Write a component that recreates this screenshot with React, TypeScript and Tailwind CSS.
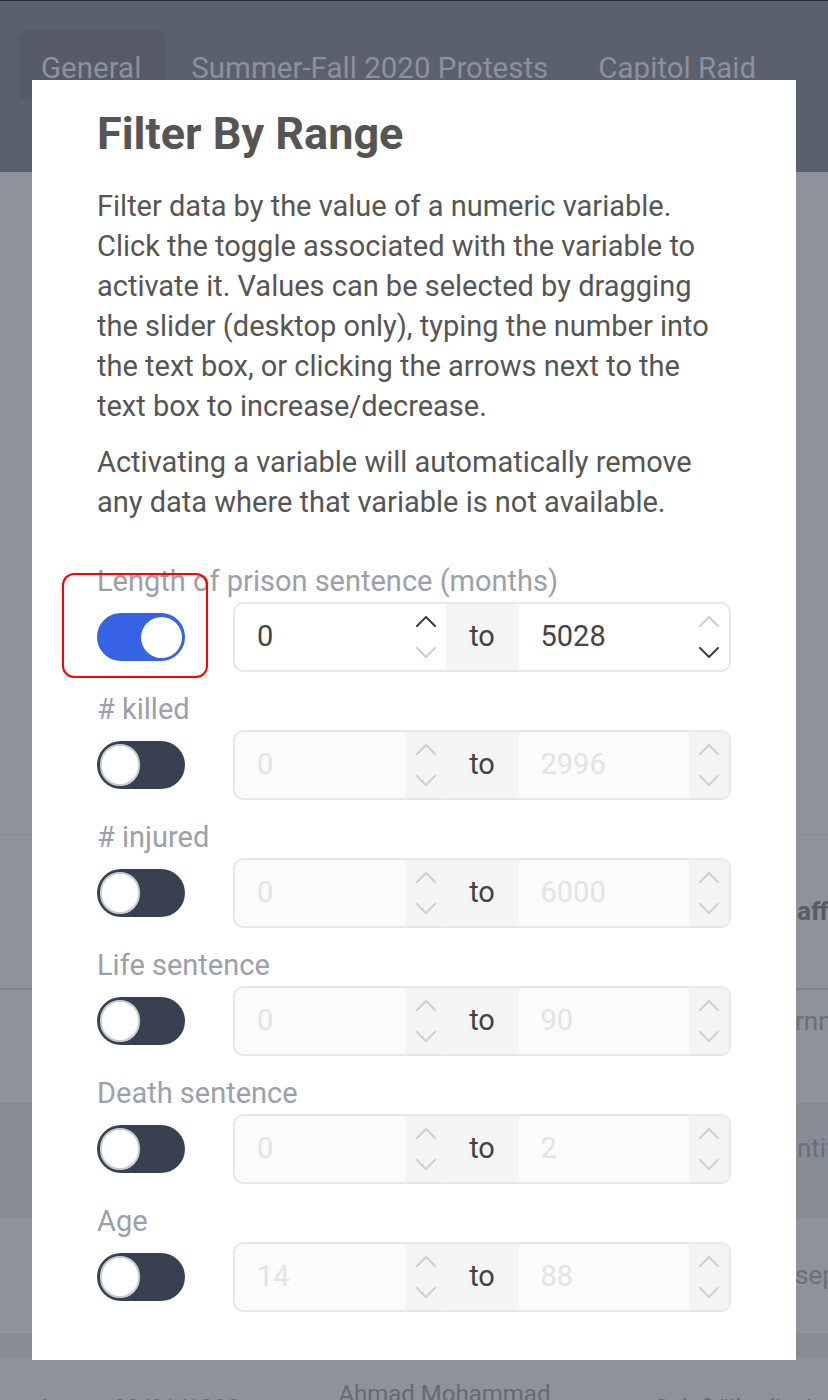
import React from "react";

const font = { fontFamily: "Roboto, 'Liberation Sans', sans-serif" };

interface RangeField {
  label: string; min: string; max: string; active: boolean;
}

const fields: RangeField[] = [
  { label: "Length of prison sentence (months)", min: "0", max: "5028", active: true },
  { label: "# killed", min: "0", max: "2996", active: false },
  { label: "# injured", min: "0", max: "6000", active: false },
  { label: "Life sentence", min: "0", max: "90", active: false },
  { label: "Death sentence", min: "0", max: "2", active: false },
  { label: "Age", min: "14", max: "88", active: false },
];

function Chevron({ dir, dark }: { dir: "up" | "down"; dark: boolean }) {
  return (
    <svg width="22" height="12" viewBox="0 0 22 12" fill="none">
      <polyline
        points={dir === "up" ? "2,11 11,2 20,11" : "2,1 11,10 20,1"}
        stroke={dark ? "#3f3f3f" : "#cfcfd3"}
        strokeWidth="2"
        strokeLinecap="round"
        strokeLinejoin="round"
      />
    </svg>
  );
}

function Spinner({ upDark, downDark, shaded }: { upDark: boolean; downDark: boolean; shaded: boolean }) {
  return (
    <div className={`w-[40px] h-full flex flex-col items-center justify-center gap-[20px] ${shaded ? "bg-[#f4f4f6]" : ""}`}>
      <Chevron dir="up" dark={upDark} />
      <Chevron dir="down" dark={downDark} />
    </div>
  );
}

function Toggle({ on }: { on: boolean }) {
  return on ? (
    <div className="w-[88px] h-[48px] rounded-full bg-[#3563e3] flex items-center justify-end pr-[3px]">
      <div className="w-[41px] h-[41px] rounded-full bg-white" />
    </div>
  ) : (
    <div className="w-[88px] h-[48px] rounded-full bg-[#394150] flex items-center pl-[3px]">
      <div className="w-[40px] h-[42px] rounded-full bg-white border-2 border-[#c9ccd2]" />
    </div>
  );
}

function RangeRow({ f }: { f: RangeField }) {
  const val = f.active ? "text-[#444]" : "text-[#e3e3e6]";
  return (
    <div className="mt-[17px] first:mt-0 relative">
      <div className="text-[29px] leading-[40px] text-[#9ca0aa] whitespace-nowrap">{f.label}</div>
      <div className="mt-px flex items-center">
        <div className="w-[136px]">
          <Toggle on={f.active} />
        </div>
        <div className={`flex-1 h-[70px] flex items-stretch rounded-[10px] border-2 border-[#e6e7ea] overflow-hidden ${f.active ? "bg-white" : "bg-[#fbfbfb]"}`}>
          <div className={`flex-1 flex items-center pl-[22px] text-[29px] ${val}`}>{f.min}</div>
          <Spinner upDark={f.active} downDark={false} shaded={!f.active} />
          <div className="w-[73px] flex items-center justify-center bg-[#f5f5f7] text-[29px] text-[#444]">to</div>
          <div className={`flex-1 flex items-center pl-[22px] text-[29px] ${val}`}>{f.max}</div>
          <Spinner upDark={false} downDark={f.active} shaded={!f.active} />
        </div>
      </div>
      {f.active && (
        <div className="absolute left-[-35px] top-[12px] w-[146px] h-[105px] rounded-[12px] border-2 border-[#ff0000]" />
      )}
    </div>
  );
}

export default function App() {
  return (
    <div className="relative w-[828px] h-[1400px] overflow-hidden bg-[#8e929b]" style={font}>
      {/* page behind the dimmed overlay */}
      <div className="h-[172px] bg-[#5b606d] border-t border-[#2b2d33] flex items-start pt-[29px] pl-[17px] gap-[2px]">
        <div className="px-[24px] h-[70px] rounded-[10px] bg-[#565b67] text-[29.5px] leading-[76px] text-[#8c919d]">General</div>
        <div className="px-[24px] text-[29.5px] leading-[76px] text-[#8c919d] whitespace-nowrap">Summer-Fall 2020 Protests</div>
        <div className="px-[24px] text-[29.5px] leading-[76px] text-[#8c919d] whitespace-nowrap">Capitol Raid</div>
      </div>
      <div className="h-[663px] border-b border-[#878b94]" />
      <div className="h-[155px] flex items-center pl-[797px] border-b-2 border-[#7f838c] whitespace-nowrap">
        <span className="text-[26px] font-bold text-[#585c67]">affiliation</span>
      </div>
      <div className="h-[113px] flex items-start pt-[12px] pl-[795px] whitespace-nowrap">
        <span className="text-[26px] text-[#6c707a]">rnment</span>
      </div>
      <div className="h-[115px] bg-[#878b95] flex items-start pt-[26px] pl-[797px] whitespace-nowrap">
        <span className="text-[26px] text-[#6c707a]">ntity</span>
      </div>
      <div className="h-[115px] flex items-center pl-[795px] whitespace-nowrap">
        <span className="text-[26px] text-[#6c707a]">seph</span>
      </div>
      <div className="h-[25px] bg-[#878b95]" />
      <div className="flex items-start pt-[18px] text-[24px] text-[#666a75]">
        <span className="ml-[37px] mt-[14px]">A</span>
        <span className="ml-[60px] mt-[14px]">03/01/1998</span>
        <span className="ml-[98px]">Ahmad Mohammad</span>
        <span className="ml-[104px] mt-[14px] whitespace-nowrap">Salafi/jihadist/</span>
      </div>

      {/* modal */}
      <div className="absolute left-[32px] top-[80px] w-[764px] h-[1280px] bg-white pt-[30px] px-[65px]">
        <h2 className="text-[45px] leading-[48px] font-bold text-[#555]">Filter By Range</h2>
        <p className="mt-[28px] text-[29px] leading-[40px] text-[#555]">
          Filter data by the value of a numeric variable. Click the toggle associated with the variable to
          activate it. Values can be selected by dragging the slider (desktop only), typing the number into
          the text box, or clicking the arrows next to the text box to increase/decrease.
        </p>
        <p className="mt-[16px] text-[29px] leading-[40px] text-[#555]">
          Activating a variable will automatically remove any data where that variable is not available.
        </p>
        <div className="mt-[39px]">
          {fields.map((f) => <RangeRow key={f.label} f={f} />)}
        </div>
      </div>
    </div>
  );
}
